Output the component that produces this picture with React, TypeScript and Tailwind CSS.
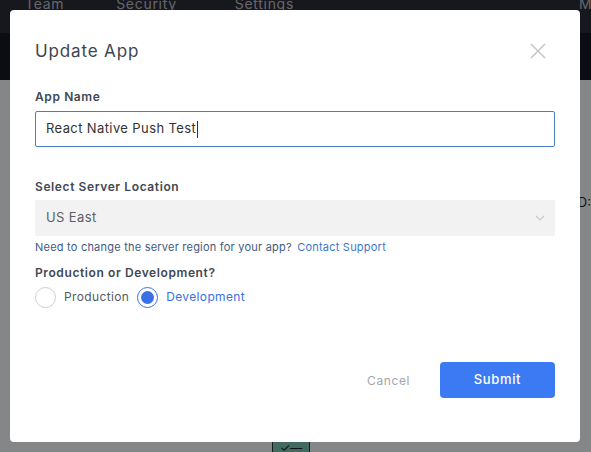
import React from 'react'

const font = { fontFamily: 'Inter, "Noto Sans", sans-serif' }

function Radio({ checked, label }: { checked?: boolean; label: string }) {
  return (
    <label className="flex items-center gap-[8px] cursor-pointer">
      {checked ? (
        <span className="w-[21px] h-[21px] rounded-full border-[1.5px] border-[#3b6fe6] flex items-center justify-center">
          <span className="w-[13px] h-[13px] rounded-full bg-[#3b6fe6]"></span>
        </span>
      ) : (
        <span className="w-[21px] h-[21px] rounded-full border border-[#cfcfcf]"></span>
      )}
      <span className={`text-[12px] tracking-[0.03em] ${checked ? 'text-[#3b6fe6]' : 'text-[#555a63]'}`}>{label}</span>
    </label>
  )
}

export default function App() {
  return (
    <div className="relative w-[591px] h-[452px] overflow-hidden bg-[#f3f4f7]" style={font}>
      {/* page behind the dialog */}
      <div className="h-[40px] bg-[#2a2d38] flex items-start text-[14px] tracking-[0.05em] text-[#b9bcc6] -mt-[7px] pl-[25px]">
        <span className="mr-[52px]">Team</span>
        <span className="mr-[58px]">Security</span>
        <span>Settings</span>
        <span className="ml-auto -mr-[10px]">My</span>
      </div>
      <div className="h-[47px] bg-[#151821]"></div>
      <div className="flex justify-end pt-[113px] text-[13px] text-[#222]">
        <span>D:</span>
      </div>
      <div className="absolute left-[272px] top-[438px] w-[38px] h-[20px] bg-[#78c2b0] border border-[#333] flex items-center justify-center text-[12px] text-[#222]">✓—</div>

      {/* overlay */}
      <div className="absolute inset-0 bg-[#000]/[0.45]"></div>

      {/* dialog */}
      <div className="absolute left-[10px] top-[10px] w-[570px] h-[432px] bg-white rounded-[4px] px-[25px] pt-[29px]">
        <div className="flex items-center justify-between">
          <h2 className="text-[17px] tracking-[0.05em] text-[#3e4451] leading-[24px]">Update App</h2>
          <svg width="16" height="16" viewBox="0 0 16 16" className="mr-[9px]">
            <path d="M1 1 L15 15 M15 1 L1 15" stroke="#c4c5c8" strokeWidth="1.5" fill="none" />
          </svg>
        </div>

        <div className="mt-[25px] text-[12px] font-semibold tracking-[0.05em] text-[#424854]">App Name</div>
        <div className="mt-[5px] w-[520px] h-[36px] border border-[#4a7fc4] rounded-[2px] flex items-center pl-[10px] text-[13px] tracking-[0.03em] text-[#333]">
          React Native Push Test<span className="w-px h-[17px] bg-[#333] ml-px"></span>
        </div>

        <div className="mt-[31px] text-[12px] font-semibold tracking-[0.05em] text-[#424854]">Select Server Location</div>
        <div className="mt-[4px] w-[520px] h-[36px] bg-[#f2f2f2] rounded-[2px] flex items-center justify-between pl-[11px] pr-[10px] text-[13px] tracking-[0.03em] text-[#5b5f66]">
          <span>US East</span>
          <svg width="10" height="6" viewBox="0 0 10 6">
            <path d="M1 1 L5 5 L9 1" stroke="#c9c9cc" strokeWidth="1.2" fill="none" />
          </svg>
        </div>
        <div className="mt-[3px] text-[11px] tracking-[0.02em] text-[#3f5a80]">
          Need to change the server region for your app?{' '}
          <span className="text-[#3b78c9] ml-[2px]">Contact Support</span>
        </div>

        <div className="mt-[8px] text-[12px] font-semibold tracking-[0.05em] text-[#424854]">Production or Development?</div>
        <div className="mt-[5px] flex items-center gap-[8px]">
          <Radio label="Production" />
          <Radio checked label="Development" />
        </div>

        <div className="mt-[54px] flex items-center justify-end gap-[30px]">
          <button className="text-[12px] tracking-[0.05em] text-[#a2a5aa] mt-[3px]">Cancel</button>
          <button className="w-[115px] h-[36px] rounded-[4px] bg-[#3b7af2] text-white text-[13px] font-medium tracking-[0.05em]">Submit</button>
        </div>
      </div>
    </div>
  )
}
